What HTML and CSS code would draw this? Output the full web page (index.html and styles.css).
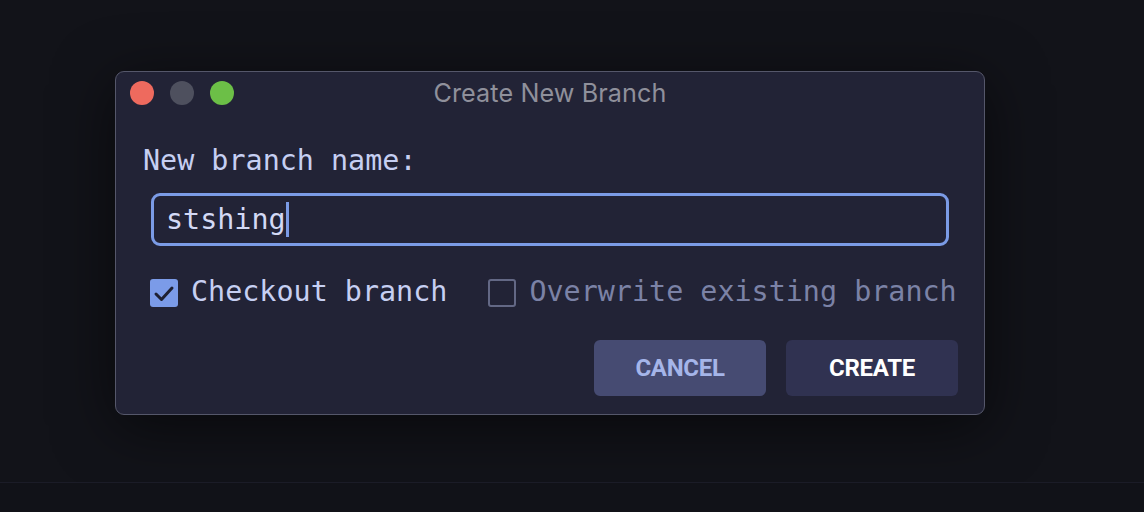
FILE: index.html
```html
<!DOCTYPE html>
<html>
<head>
<meta charset="utf-8">
<link rel="stylesheet" href="styles.css">
</head>
<body>
<div class="stage">
  <div class="window">
    <div class="titlebar">
      <div class="lights">
        <span class="light red"></span>
        <span class="light gray"></span>
        <span class="light green"></span>
      </div>
      <div class="title">Create New Branch</div>
      <div></div>
    </div>
    <div class="content">
      <div class="label">New branch name:</div>
      <div class="input"><span class="value">stshing</span><span class="caret"></span></div>
      <div class="options">
        <div class="option">
          <span class="box checked">
            <svg width="28" height="28" viewBox="0 0 28 28"><polyline points="6,15 11.5,20.5 22,9" fill="none" stroke="#1e2032" stroke-width="3" stroke-linecap="round" stroke-linejoin="round"/></svg>
          </span>
          <span class="opt-text">Checkout branch</span>
        </div>
        <div class="option">
          <span class="box"></span>
          <span class="opt-text dim">Overwrite existing branch</span>
        </div>
      </div>
      <div class="actions">
        <button class="btn cancel">CANCEL</button>
        <button class="btn create">CREATE</button>
      </div>
    </div>
  </div>
</div>
<div class="footer"></div>
</body>
</html>
```

FILE: styles.css
```css
html, body {
  margin: 0;
  padding: 0;
}
body {
  width: 1144px;
  height: 512px;
  overflow: hidden;
  background: #121319;
}
.stage {
  height: 482px;
  box-sizing: border-box;
  padding: 71px 0 0 115px;
}
.window {
  width: 870px;
  box-sizing: border-box;
  background: #222336;
  border: 1px solid #55576a;
  border-radius: 9px;
  box-shadow: 0 12px 60px rgba(0, 0, 0, 0.55);
}
.titlebar {
  height: 42px;
  display: grid;
  grid-template-columns: 1fr auto 1fr;
  align-items: center;
  padding-left: 14px;
  padding-right: 14px;
}
.lights {
  display: flex;
  gap: 16px;
}
.light {
  width: 24px;
  height: 24px;
  border-radius: 50%;
  display: block;
}
.red { background: #ee6a5e; }
.gray { background: #4e505e; }
.green { background: #6cbf47; }
.title {
  font-family: Inter, "Noto Sans", sans-serif;
  font-size: 25.2px;
  color: #8f909b;
  letter-spacing: 0.1px;
}
.content {
  padding: 30px 26px 18px 27px;
  font-family: "DejaVu Sans Mono", "Liberation Mono", monospace;
  font-size: 28.4px;
  color: #c6cff2;
}
.label {
  line-height: 34px;
  height: 34px;
}
.input {
  margin: 15px 9px 0 8px;
  height: 53px;
  box-sizing: border-box;
  border: 3px solid #7b9be6;
  border-radius: 9px;
  display: flex;
  align-items: center;
  padding-left: 12px;
}
.value {
  line-height: 34px;
  color: #d3d9f5;
}
.caret {
  display: inline-block;
  width: 3px;
  height: 35px;
  background: #7b9be6;
}
.options {
  margin-top: 30px;
  height: 34px;
  display: flex;
  align-items: center;
  gap: 41px;
  padding-left: 7px;
}
.option {
  display: flex;
  align-items: center;
  gap: 13px;
}
.box {
  width: 28px;
  height: 28px;
  box-sizing: border-box;
  border: 2px solid #636885;
  border-radius: 3px;
  display: block;
}
.box.checked {
  border: none;
  background: #7b9be8;
}
.box svg {
  display: block;
}
.opt-text {
  line-height: 34px;
  position: relative;
  top: -1px;
}
.opt-text.dim {
  color: #7b82a6;
}
.actions {
  margin-top: 30px;
  display: flex;
  justify-content: flex-end;
  gap: 20px;
}
.btn {
  width: 172px;
  height: 56px;
  border: none;
  border-radius: 6px;
  font-family: Roboto, "Liberation Sans", sans-serif;
  font-weight: 700;
  font-size: 24px;
  letter-spacing: -0.3px;
  padding: 0;
}
.cancel {
  background: #464b72;
  color: #a5b5e9;
}
.create {
  background: #303251;
  color: #ffffff;
}
.footer {
  height: 30px;
  box-sizing: border-box;
  border-top: 1px solid #1b1c27;
  background: #111218;
}
```
